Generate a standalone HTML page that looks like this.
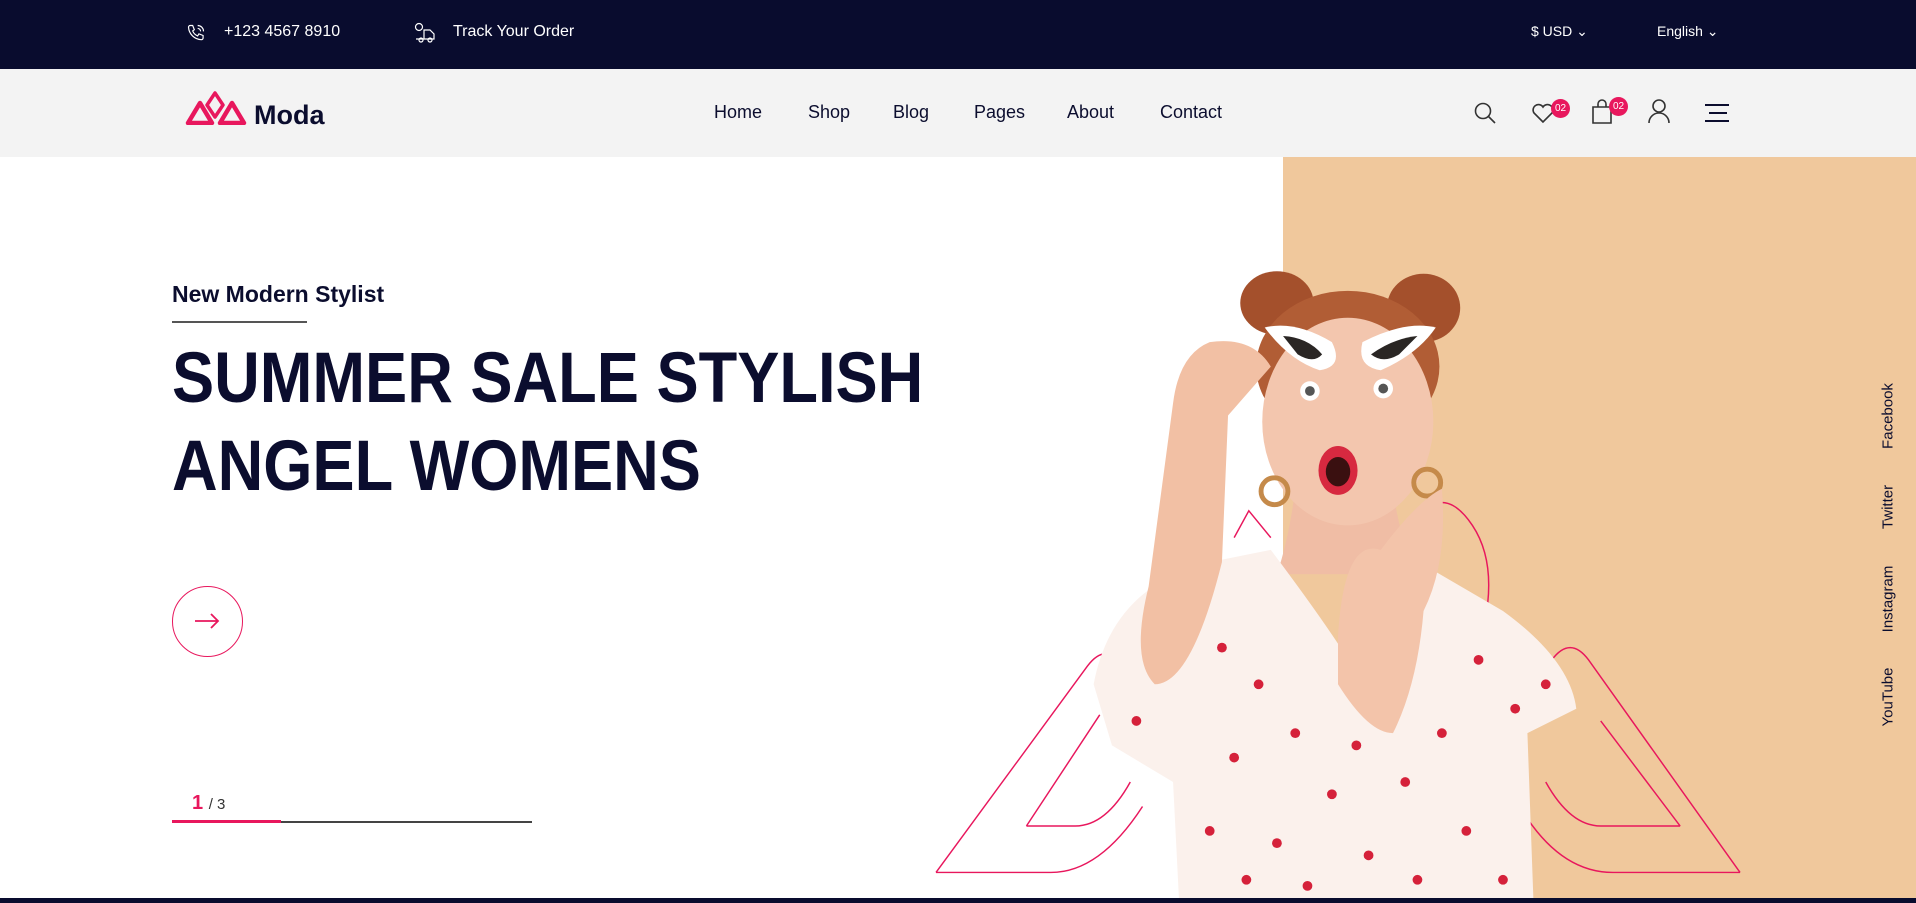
<!DOCTYPE html>
<html><head><meta charset="utf-8">
<style>
*{margin:0;padding:0;box-sizing:border-box}
body{width:1916px;height:903px;overflow:hidden;background:#fff;font-family:"Liberation Sans",sans-serif;position:relative;color:#0b0d2e}
.top{position:absolute;left:0;top:0;width:1916px;height:69px;background:#090c2e;color:#fff;font-size:16px}
.top span{position:absolute;top:23px}
.nav{position:absolute;left:0;top:69px;width:1916px;height:88px;background:#f3f3f3}
.nav a{position:absolute;top:33px;font-size:18px;color:#0b0d2e;text-decoration:none}
.peach{position:absolute;left:1283px;top:157px;width:633px;height:741px;background:#f0c89c}
.bottom{position:absolute;left:0;top:898px;width:1916px;height:5px;background:#090c2e}
.t{position:absolute;white-space:nowrap}
.soc{position:absolute;left:1888px;transform:translate(-50%,-50%) rotate(-90deg);font-size:15px;color:#0b0d2e;white-space:nowrap}
.badge{position:absolute;width:19px;height:19px;border-radius:50%;background:#e8175d;color:#fff;font-size:10px;text-align:center;line-height:19px}
</style></head><body>
<div class="top">
<svg style="position:absolute;left:186px;top:23px" width="20" height="20" viewBox="0 0 24 24" fill="none" stroke="#fff" stroke-width="1.4"><path d="M5 3l3 0 2 5-2 1.5a11 11 0 0 0 6 6L15.5 13l5 2v3a2 2 0 0 1-2 2A16 16 0 0 1 3 5a2 2 0 0 1 2-2z"/><path d="M14 3a7 7 0 0 1 7 7M14 6.5a3.5 3.5 0 0 1 3.5 3.5"/></svg>
<span style="left:224px">+123 4567 8910</span>
<svg style="position:absolute;left:413px;top:22px" width="24" height="22" viewBox="0 0 24 22" fill="none" stroke="#fff" stroke-width="1.2"><circle cx="6" cy="5" r="3.5"/><path d="M11 8h6l4 4v5h-10zM3 17h8"/><circle cx="8" cy="18" r="2"/><circle cx="17" cy="18" r="2"/></svg>
<span style="left:453px">Track Your Order</span>
<span style="left:1531px;font-size:14px">$ USD ⌄</span>
<span style="left:1657px;font-size:14px">English ⌄</span>
</div>
<div class="nav">
<svg style="position:absolute;left:185px;top:22px" width="62" height="34" viewBox="0 0 62 34" fill="none" stroke="#e8175d" stroke-width="4.5" stroke-linejoin="round"><path d="M3 32L15 12 27 32zM35 32L47 12 59 32z"/><path d="M22 14l8-12 8 12-8 12z" stroke-width="3.5"/></svg>
<div class="t" style="left:254px;top:31px;font-size:27px;font-weight:bold;color:#0b0d2e">Moda</div>
<a style="left:714px">Home</a><a style="left:808px">Shop</a><a style="left:893px">Blog</a><a style="left:974px">Pages</a><a style="left:1067px">About</a><a style="left:1160px">Contact</a>
<svg style="position:absolute;left:1473px;top:32px" width="24" height="24" viewBox="0 0 24 24" fill="none" stroke="#333" stroke-width="1.6"><circle cx="10" cy="10" r="7.5"/><path d="M15.5 15.5L22 22"/></svg>
<svg style="position:absolute;left:1531px;top:33px" width="24" height="22" viewBox="0 0 24 22" fill="none" stroke="#333" stroke-width="1.6"><path d="M12 20L3 11a5 5 0 0 1 9-6 5 5 0 0 1 9 6z"/></svg>
<div class="badge" style="left:1551px;top:30px">02</div>
<svg style="position:absolute;left:1591px;top:30px" width="22" height="26" viewBox="0 0 22 26" fill="none" stroke="#333" stroke-width="1.6"><path d="M2 8h18v16H2zM7 8V5a4 4 0 0 1 8 0v3"/></svg>
<div class="badge" style="left:1609px;top:28px">02</div>
<svg style="position:absolute;left:1647px;top:29px" width="24" height="26" viewBox="0 0 24 26" fill="none" stroke="#333" stroke-width="1.6"><circle cx="12" cy="8" r="6"/><path d="M2 25a10 10 0 0 1 20 0"/></svg>
<svg style="position:absolute;left:1703px;top:34px" width="28" height="20" viewBox="0 0 28 20" stroke="#0b0d2e" stroke-width="2"><path d="M2 2h24M6 10h18M2 18h24"/></svg>
</div>
<div class="peach"></div>
<div class="t" style="left:172px;top:281px;font-size:23px;font-weight:bold">New Modern Stylist</div>
<div style="position:absolute;left:172px;top:321px;width:135px;height:2px;background:#555"></div>
<div class="t" style="left:172px;top:335px;font-size:71px;font-weight:bold;line-height:88px;transform:scaleX(0.89);transform-origin:0 0">SUMMER SALE STYLISH<br>ANGEL WOMENS</div>
<div style="position:absolute;left:172px;top:586px;width:71px;height:71px;border:1.5px solid #e8175d;border-radius:50%"></div>
<svg style="position:absolute;left:194px;top:612px" width="26" height="18" viewBox="0 0 26 18" fill="none" stroke="#e8175d" stroke-width="1.8"><path d="M1 9h23M17 2l7 7-7 7"/></svg>
<div class="t" style="left:192px;top:792px;font-size:20px;font-weight:bold;color:#e8175d">1 <span style="font-size:15px;font-weight:normal;color:#333">/ 3</span></div>
<div style="position:absolute;left:172px;top:821px;width:360px;height:2px;background:#444"></div>
<div style="position:absolute;left:172px;top:820px;width:109px;height:3px;background:#e8175d"></div>
<svg style="position:absolute;left:0;top:0" width="1916" height="903" viewBox="0 0 1568 739" fill="none">
<g stroke="#e8175d" stroke-width="1.2">
<path d="M766 714L890 545Q905 525 920 545"/><path d="M766 714H860Q900 714 935 660"/>
<path d="M840 676H880Q905 676 925 640M840 676L900 585"/>
<path d="M1424 714L1300 540Q1285 520 1270 540"/><path d="M1424 714H1320Q1280 714 1250 670"/>
<path d="M1375 676L1310 590M1375 676H1310Q1285 676 1265 640"/>
<path d="M1010 440L1022 418 1040 440M1150 440L1165 418Q1185 400 1205 430 1225 460 1215 510"/>
</g>
<g>
<ellipse cx="1045" cy="248" rx="30" ry="26" fill="#a4502c"/><ellipse cx="1165" cy="252" rx="30" ry="28" fill="#a4502c"/>
<ellipse cx="1103" cy="300" rx="75" ry="62" fill="#b15d35"/>
<path d="M1060 400Q1055 440 1045 470L1160 470Q1145 440 1140 400z" fill="#f0bda5"/>
<ellipse cx="1103" cy="345" rx="70" ry="85" fill="#f3c6ae"/>
<ellipse cx="1095" cy="385" rx="16" ry="20" fill="#d72940"/><ellipse cx="1095" cy="386" rx="10" ry="12" fill="#3a1010"/>
<circle cx="1072" cy="320" r="8" fill="#fff"/><circle cx="1072" cy="320" r="4" fill="#555"/>
<circle cx="1132" cy="318" r="8" fill="#fff"/><circle cx="1132" cy="318" r="4" fill="#555"/>
<circle cx="1043" cy="402" r="11" stroke="#c58a4a" stroke-width="4"/><circle cx="1168" cy="395" r="11" stroke="#c58a4a" stroke-width="4"/>
<path d="M1035 268Q1060 262 1090 280 1100 300 1080 303 1055 295 1035 268z" fill="#fff"/><path d="M1050 275Q1070 276 1082 290 1075 298 1062 290z" fill="#2a2624"/>
<path d="M1175 268Q1150 262 1115 280 1110 300 1130 303 1160 290 1175 268z" fill="#fff"/><path d="M1160 275Q1140 277 1122 290 1132 298 1145 290z" fill="#2a2624"/>
<path d="M895 560Q910 480 990 460L1040 450Q1100 530 1115 560 1140 500 1170 465L1230 500Q1285 540 1290 580L1250 600 1255 739H965L960 640 910 610z" fill="#fbf1ec"/>
<path d="M960 330Q965 290 990 280 1025 275 1040 300L1005 340 1000 460Q975 560 945 560 925 540 940 480z" fill="#f2c0a4"/>
<path d="M1095 520Q1100 440 1130 450 1160 410 1180 400 1185 460 1165 500 1160 560 1140 600 1120 600 1095 560z" fill="#f3c4aa"/>
<g fill="#d5213a">
<circle cx="1000" cy="530" r="4"/><circle cx="1030" cy="560" r="4"/><circle cx="1060" cy="600" r="4"/><circle cx="1010" cy="620" r="4"/><circle cx="990" cy="680" r="4"/><circle cx="1045" cy="690" r="4"/><circle cx="1090" cy="650" r="4"/><circle cx="1120" cy="700" r="4"/><circle cx="1150" cy="640" r="4"/><circle cx="1180" cy="600" r="4"/><circle cx="1210" cy="540" r="4"/><circle cx="1240" cy="580" r="4"/><circle cx="1200" cy="680" r="4"/><circle cx="1230" cy="720" r="4"/><circle cx="1070" cy="725" r="4"/><circle cx="930" cy="590" r="4"/><circle cx="1265" cy="560" r="4"/><circle cx="1020" cy="720" r="4"/><circle cx="1160" cy="720" r="4"/><circle cx="1110" cy="610" r="4"/>
</g></g>
</svg>
<div class="soc" style="top:416px">Facebook</div>
<div class="soc" style="top:507px">Twitter</div>
<div class="soc" style="top:599px">Instagram</div>
<div class="soc" style="top:697px">YouTube</div>
<div class="bottom"></div>
</body></html>
